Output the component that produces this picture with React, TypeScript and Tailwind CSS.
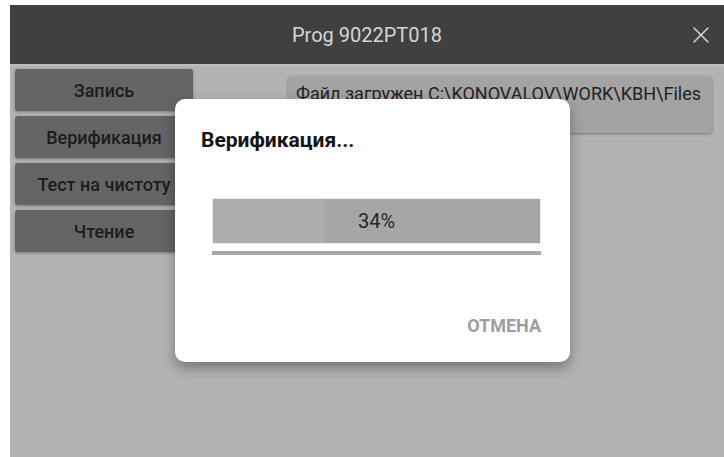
import React from 'react';
import { X } from 'lucide-react';

const font = { fontFamily: 'Roboto, "Noto Sans", sans-serif' };

const actions = ['Запись', 'Верификация', 'Тест на чистоту', 'Чтение'];

function ProgressDialog({ title, percent }: { title: string; percent: number }) {
  return (
    <div className="absolute left-[165px] top-[33px] w-[395px] h-[263px] rounded-[10px] bg-white shadow-[0_6px_14px_rgba(0,0,0,0.35)] flex flex-col pl-[26px] pr-[29px]">
      <div className="mt-[27px] text-[21px] font-bold leading-[28px] text-[#141414]">{title}</div>

      {/* progress bar */}
      <div className="mt-[44px] ml-[11px] relative h-[46px] bg-[#a6a6a6] border border-[#ececec]">
        <div className="absolute inset-y-0 left-0 bg-[#adadad]" style={{ width: `${percent}%` }} />
        <div className="relative h-full flex items-center justify-center text-[20px] text-[#262626]">
          {percent}%
        </div>
      </div>
      <div className="mt-[7px] ml-[11px] h-[4px] bg-[#a8a8a8]" />

      <div className="mt-auto mb-[25px] flex justify-end">
        <button className="text-[18px] leading-[22px] font-bold text-[#9e9e9e]">ОТМЕНА</button>
      </div>
    </div>
  );
}

export default function App() {
  return (
    <div className="w-[724px] h-[457px] bg-white pl-[10px] pt-[5px]" style={font}>
      <div className="h-full flex flex-col">
        {/* title bar */}
        <div className="relative h-[59px] shrink-0 bg-[#404040] flex items-center justify-center">
          <span className="text-[20px] text-[#d6d6d6]">Prog 9022PT018</span>
          <X className="absolute right-[9px] top-1/2 -translate-y-1/2 text-[#d0d0d0]" size={28} strokeWidth={1.3} />
        </div>

        <div className="relative flex-1 bg-[#b3b3b3] border-t-2 border-[#bdbdbd] flex items-start pl-[5px] pt-[3px] pr-[12px]">
          <div className="w-[178px] flex flex-col gap-[5px]">
            {actions.map((a) => (
              <button
                key={a}
                className="h-[42px] rounded-[3px] bg-[#656565] shadow-[0_1px_3px_rgba(0,0,0,0.35)] text-[18px] font-medium text-[#1c1c1c] whitespace-nowrap overflow-hidden"
              >
                {a}
              </button>
            ))}
          </div>

          <div className="ml-[95px] mt-[7px] flex-1 h-[57px] rounded-[4px] bg-[#a3a3a3] shadow-[0_1px_3px_rgba(0,0,0,0.35)] pl-[8px] pr-[1px] pt-[7px] text-[18px] leading-[21px] text-[#222]">
            Файл загружен C:\KONOVALOV\WORK\KBH\Files \9022PT018.hex
          </div>

          <ProgressDialog title="Верификация..." percent={34} />
        </div>
      </div>
    </div>
  );
}
